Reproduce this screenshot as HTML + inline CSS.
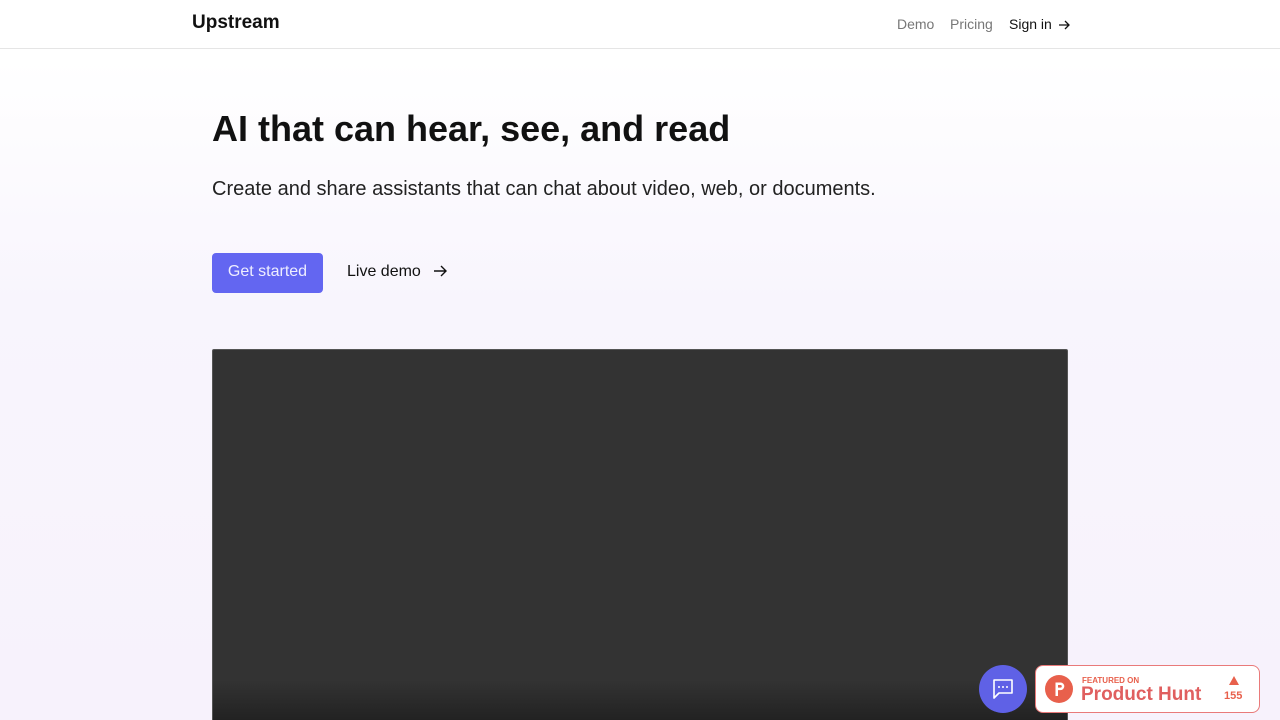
<!DOCTYPE html>
<html><head><meta charset="utf-8"><style>
*{margin:0;padding:0;box-sizing:border-box}
html,body{width:1280px;height:720px;overflow:hidden}
body{font-family:"Liberation Sans",sans-serif;background:linear-gradient(#fff 0px,#fff 60px,#f8f5fd 300px,#f7f2fc 720px);position:relative}
.hdr{height:49px;border-bottom:1px solid #e5e5e5;background:#fff;position:relative}
.logo{position:absolute;left:192px;top:12px;font-size:19px;font-weight:bold;color:#111}
.nav{position:absolute;top:16px;font-size:14px;color:#777}
h1{position:absolute;left:212px;top:108px;font-size:36px;font-weight:bold;color:#111}
.sub{position:absolute;left:212px;top:178px;font-size:20px;color:#222}
.btn{position:absolute;left:212px;top:253px;width:111px;height:40px;background:#6366f1;border-radius:4px;color:#eef;font-size:16px;text-align:center;line-height:38px}
.live{position:absolute;left:347px;top:263px;font-size:16px;color:#111}
.video{position:absolute;left:212px;top:349px;width:856px;height:380px;background:linear-gradient(#333 0,#333 330px,#1e1e1e 380px);border:1px solid #555;border-radius:2px}
.chat{position:absolute;left:979px;top:665px;width:48px;height:48px;border-radius:50%;background:#5f61e6}
.ph{position:absolute;left:1035px;top:665px;width:225px;height:48px;background:#fff;border:1px solid #e97a7a;border-radius:8px}
</style></head><body>
<div class="hdr">
<div class="logo">Upstream</div>
<div class="nav" style="left:897px">Demo</div>
<div class="nav" style="left:950px">Pricing</div>
<div class="nav" style="left:1009px;color:#111">Sign in <svg width="12" height="12" viewBox="0 0 12 12" style="vertical-align:-2px;margin-left:2px"><path d="M1 6h10M7 2l4 4-4 4" stroke="#111" stroke-width="1.3" fill="none"/></svg></div>
</div>
<h1>AI that can hear, see, and read</h1>
<div class="sub">Create and share assistants that can chat about video, web, or documents.</div>
<div class="btn">Get started</div>
<div class="live">Live demo <svg width="14" height="14" viewBox="0 0 14 14" style="vertical-align:-2px;margin-left:8px"><path d="M1 7h12M8 2l5 5-5 5" stroke="#111" stroke-width="1.4" fill="none"/></svg></div>
<div class="video"></div>
<div class="chat"><svg width="48" height="48" viewBox="0 0 48 48"><path d="M15 15h18v13H20l-5 5z" fill="none" stroke="#fff" stroke-width="1.6" stroke-linejoin="round"/><circle cx="20" cy="22" r="1" fill="#fff"/><circle cx="24" cy="22" r="1" fill="#fff"/><circle cx="28" cy="22" r="1" fill="#fff"/></svg></div>
<div class="ph">
<svg width="30" height="30" viewBox="0 0 30 30" style="position:absolute;left:8px;top:8px"><circle cx="15" cy="15" r="14" fill="#e8604c"/><path d="M11.5 8.5h5a3.8 3.8 0 0 1 0 7.6h-2.5V22h-2.5z M14 11v2.6h2.5a1.3 1.3 0 0 0 0-2.6z" fill="#fff" fill-rule="evenodd"/></svg>
<div style="position:absolute;left:46px;top:10px;font-size:8px;font-weight:bold;color:#e8604c">FEATURED ON</div>
<div style="position:absolute;left:45px;top:18px;font-size:19px;font-weight:bold;color:#e05f5f">Product Hunt</div>
<svg width="10" height="9" viewBox="0 0 10 9" style="position:absolute;left:193px;top:10px"><path d="M5 0l5 9H0z" fill="#e8604c"/></svg>
<div style="position:absolute;left:188px;top:24px;font-size:11px;font-weight:bold;color:#e8604c">155</div>
</div>
</body></html>
